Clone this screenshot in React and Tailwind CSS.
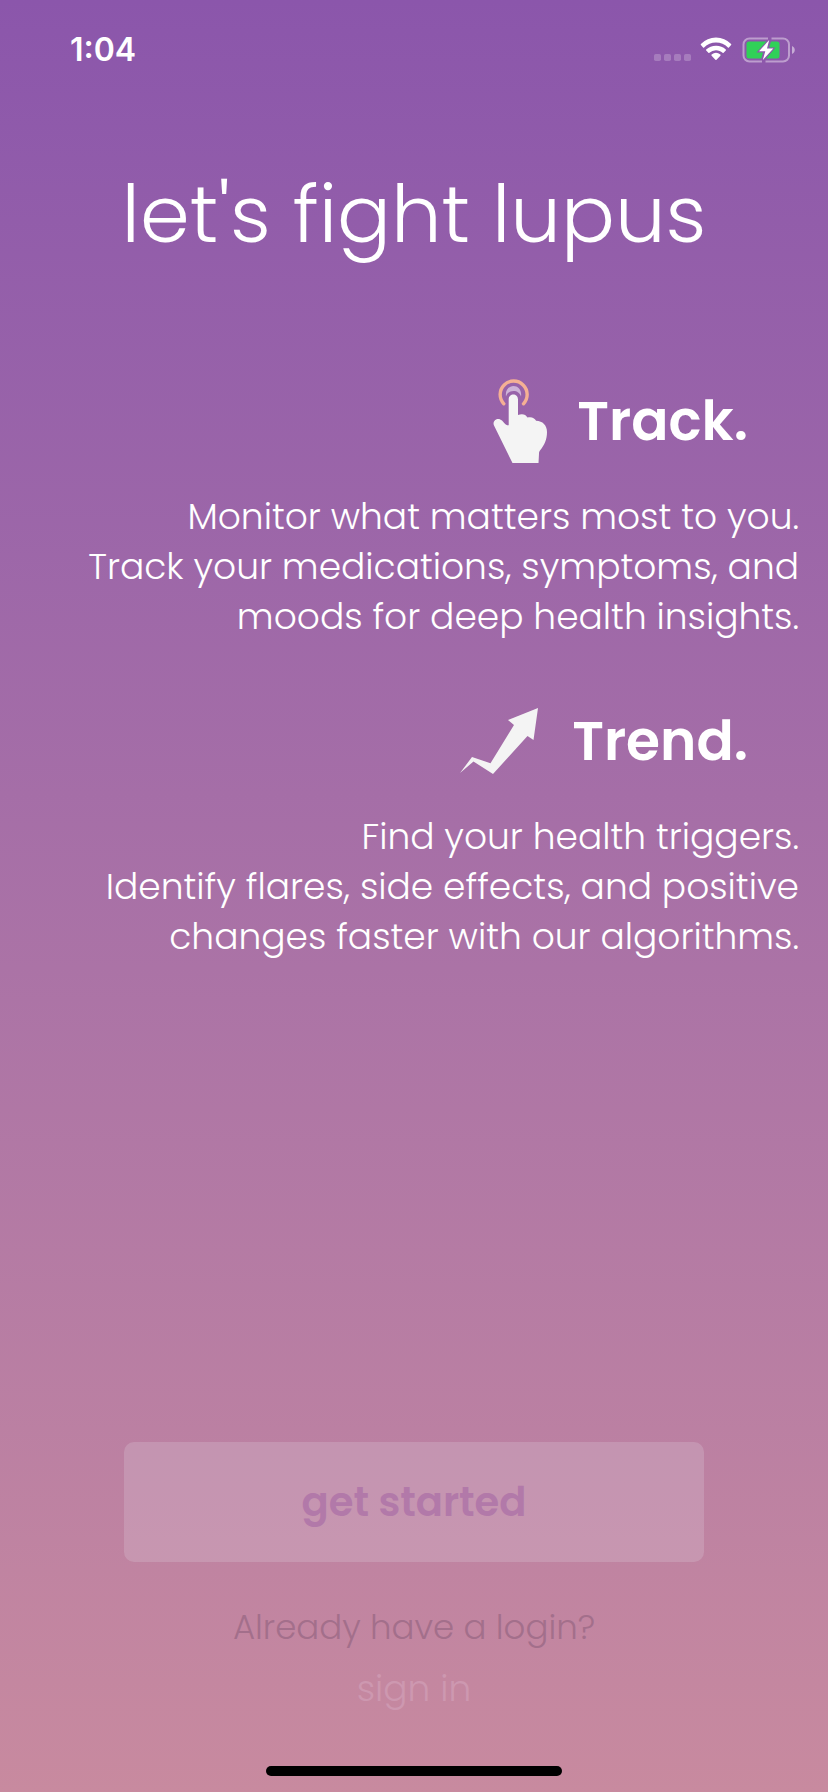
function StatusIcons() {
  return (
    <div className="flex items-center gap-2">
      <svg width="38" height="26" viewBox="0 0 38 26" fill="#fff" fillOpacity="0.22" role="img" aria-label="No signal">
        <rect x="0" y="17" width="7" height="7" rx="1.8" />
        <rect x="10" y="17" width="7" height="7" rx="1.8" />
        <rect x="20" y="17" width="7" height="7" rx="1.8" />
        <rect x="30" y="17" width="7" height="7" rx="1.8" />
      </svg>
      <svg width="34" height="26" viewBox="0 0 34 26" fill="#fff" role="img" aria-label="Wi-Fi">
        <path d="M16 5.600c4.600 0 8.800 1.800 11.900 4.800.3.300.7.300 1 0l2.200-2.300c.3-.3.3-.8 0-1.100A21.600 21.600 0 0 0 16 0.500 21.600 21.600 0 0 0 .9 7c-.3.300-.3.800 0 1.100l2.200 2.300c.3.300.7.300 1 0A17 17 0 0 1 16 5.600z" />
        <path d="M16 13.300c2.500 0 4.800.9 6.600 2.500.3.300.7.300 1 0l2.200-2.300c.3-.3.3-.8 0-1.100A14.300 14.300 0 0 0 16 8.700c-3.800 0-7.200 1.400-9.800 3.700-.3.300-.3.800 0 1.100l2.200 2.300c.3.300.7.300 1 0A9.800 9.800 0 0 1 16 13.300z" />
        <path d="M20.400 18.700c.3-.3.3-.8 0-1.100a7 7 0 0 0-8.800 0c-.3.300-.3.800 0 1.100l3.800 4c.3.300.8.300 1.100 0z" />
      </svg>
      <svg width="54" height="26" viewBox="0 0 54 26" fill="none" role="img" aria-label="Battery charging">
        <path d="M26 1.500H7.500a6 6 0 0 0-6 6v11a6 6 0 0 0 6 6H20M29.500 1.500h11.500a6 6 0 0 1 6 6v11a6 6 0 0 1-6 6H23.500" stroke="#fff" strokeOpacity="0.42" strokeWidth="2" />
        <path d="M50 9v8c1.600-.7 2.800-2.200 2.800-4S51.600 9.700 50 9z" fill="#fff" fillOpacity="0.5" />
        <path d="M7 4.500H24.500L14.500 15.500H21L19.300 21.500H7a2.500 2.500 0 0 1-2.500-2.500V7A2.500 2.500 0 0 1 7 4.500zM29 4.500h6a2.500 2.500 0 0 1 2.500 2.500v12a2.500 2.500 0 0 1-2.500 2.500H24L33.500 10.500H27z" fill="#30d158" />
        <path d="M27.200 3 17 14.200h6.300L20.800 23 31.300 11.600H25z" fill="#fff" />
      </svg>
    </div>
  );
}

function TapIcon() {
  return (
    <svg width="54" height="84" viewBox="0 0 54 84" fill="none" aria-hidden="true">
      <path d="M10.800 24.800A13.500 13.500 0 1 1 30.500 24.800" stroke="#f5b094" strokeWidth="3.400" strokeLinecap="round" />
      <path d="M13 17.500C12 11 16 7 20.500 7s8.500 4 7.500 10.500c-1-3.500-4-5.500-7.500-5.500s-6.500 2-7.500 5.500z" fill="#ceb3d8" />
      <path d="M15.700 20.500c0-6.800 9.300-6.800 9.300 0V36c4.500-1.700 7.700-.5 9.500 2.500 4-1 6.800.2 8.600 3.200 6.500.2 10.900 4.500 10.900 11.300 0 7.500-2.500 13-7 18.500-.8 1-1 2-1 3.200L45.500 84H19.500L1 46.500c-2.200-4.800 4-9 8-5 2 2 3.500 5.200 6.700 4.800z" fill="#f4f4f4" />
    </svg>
  );
}

function TrendIcon() {
  return (
    <svg width="82" height="66" viewBox="0 0 82 66" aria-hidden="true">
      <path d="M78 0 73.500 32 67.500 28 33 66 13.500 53.500 0 65 12 49 30.500 55.300 54 17 48 12z" fill="#f4f4f4" />
    </svg>
  );
}

function Feature({ icon, title, lines }) {
  return (
    <section className="text-right text-white">
      <div className="flex items-center justify-end gap-[30px] pr-20">
        {icon}
        <h2 className="text-[55px] leading-[86px] font-semibold">{title}</h2>
      </div>
      <p className="mt-7 pr-[29px] text-[36px] leading-[50px] font-light">
        {lines.map((line) => (
          <span key={line} className="block">{line}</span>
        ))}
      </p>
    </section>
  );
}

export default function App() {
  return (
    <div className="flex min-h-screen flex-col bg-linear-to-b from-[#8b56ab] to-[#c88a9f] font-['Poppins','Inter',sans-serif]">
      <header className="flex h-25 items-center justify-between pr-8 pl-17.5">
        <time className="font-['Inter',sans-serif] text-[32px] leading-10 font-semibold text-white">1:04</time>
        <StatusIcons />
      </header>
      <main className="flex flex-1 flex-col">
        <h1 className="mt-[58px] text-center text-[80px] leading-[112px] font-light text-white">let's fight lupus</h1>
        <div className="mt-27 flex flex-col gap-14">
          <Feature
            icon={<TapIcon />}
            title="Track."
            lines={["Monitor what matters most to you.", "Track your medications, symptoms, and", "moods for deep health insights."]}
          />
          <Feature
            icon={<TrendIcon />}
            title="Trend."
            lines={["Find your health triggers.", "Identify flares, side effects, and positive", "changes faster with our algorithms."]}
          />
        </div>
        <div className="mt-auto flex flex-col items-center pb-13 leading-[50px] font-light">
          <button type="button" className="h-30 w-7/10 rounded-[10px] bg-[#dbc8d8]/28 text-[40px] font-semibold text-[#b279a9]">
            get started
          </button>
          <p className="mt-10 text-[34px] text-[#a36f8b]">Already have a login?</p>
          <a href="#sign-in" className="mt-3 text-[36px] text-[#cd98b0]">sign in</a>
        </div>
      </main>
      <footer className="flex justify-center pb-4">
        <div className="h-[10px] w-74 rounded-full bg-black" />
      </footer>
    </div>
  );
}
